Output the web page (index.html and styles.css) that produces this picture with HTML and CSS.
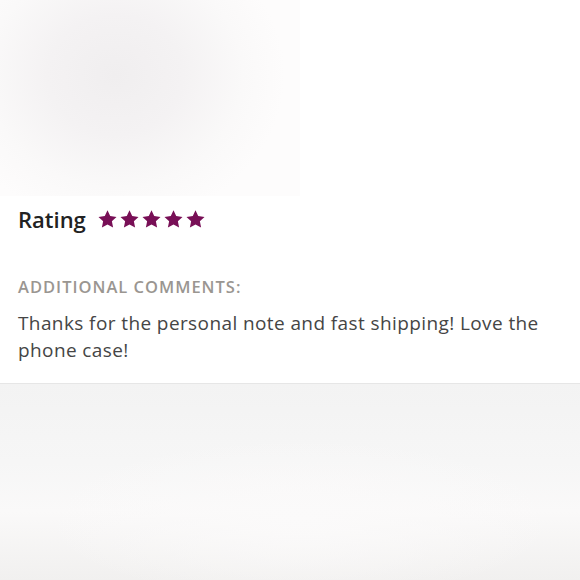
FILE: index.html
```html
<!DOCTYPE html>
<html>
<head>
<meta charset="utf-8">
<link rel="stylesheet" href="styles.css">
</head>
<body>
<div class="hero"><div class="blur"></div></div>
<section class="review">
  <div class="rating">
    <span class="rating-label">Rating</span>
    <span class="stars">
      <svg class="star" viewBox="0 0 24 24"><path d="M12 1.5l3.1 6.6 7.2.9-5.3 5 1.4 7.2L12 17.7l-6.4 3.5 1.4-7.2-5.3-5 7.2-.9z"/></svg>
      <svg class="star" viewBox="0 0 24 24"><path d="M12 1.5l3.1 6.6 7.2.9-5.3 5 1.4 7.2L12 17.7l-6.4 3.5 1.4-7.2-5.3-5 7.2-.9z"/></svg>
      <svg class="star" viewBox="0 0 24 24"><path d="M12 1.5l3.1 6.6 7.2.9-5.3 5 1.4 7.2L12 17.7l-6.4 3.5 1.4-7.2-5.3-5 7.2-.9z"/></svg>
      <svg class="star" viewBox="0 0 24 24"><path d="M12 1.5l3.1 6.6 7.2.9-5.3 5 1.4 7.2L12 17.7l-6.4 3.5 1.4-7.2-5.3-5 7.2-.9z"/></svg>
      <svg class="star" viewBox="0 0 24 24"><path d="M12 1.5l3.1 6.6 7.2.9-5.3 5 1.4 7.2L12 17.7l-6.4 3.5 1.4-7.2-5.3-5 7.2-.9z"/></svg>
    </span>
  </div>
  <div class="label">ADDITIONAL COMMENTS:</div>
  <p class="comment">Thanks for the personal note and fast shipping! Love the phone case!</p>
</section>
<div class="footer-blur"></div>
</body>
</html>
```
FILE: styles.css
```css
html, body {
  margin: 0;
  padding: 0;
  background: #ffffff;
}
body {
  width: 580px;
  height: 580px;
  overflow: hidden;
  font-family: "Open Sans", Lato, sans-serif;
  display: flex;
  flex-direction: column;
}
.hero {
  height: 196px;
  flex: none;
}
.blur {
  width: 300px;
  height: 196px;
  background: radial-gradient(ellipse 170px 150px at 115px 75px, #f0eeef 0%, #f4f2f3 40%, #faf9f9 75%, #fdfcfc 100%);
}
.review {
  padding: 9px 18px 19px;
  border-bottom: 1px solid #e6e6e6;
  flex: none;
}
.rating {
  display: flex;
  align-items: center;
  gap: 11px;
  height: 28px;
}
.rating-label {
  font-size: 22px;
  font-weight: 600;
  color: #222222;
}
.stars {
  display: flex;
  gap: 1px;
}
.star {
  width: 21px;
  height: 21px;
  fill: #780f56;
}
.label {
  margin-top: 44px;
  font-size: 16.5px;
  font-weight: 600;
  color: #9a9691;
  letter-spacing: 1px;
  line-height: 20px;
}
.comment {
  margin: 13px 0 0;
  font-size: 19px;
  line-height: 27px;
  letter-spacing: 0.4px;
  color: #454545;
}
.footer-blur {
  flex: 1;
  background:
    radial-gradient(ellipse 260px 80px at 300px 135px, #fbfafa 0%, rgba(251,250,250,0) 100%),
    linear-gradient(180deg, #f3f3f3 0%, #f6f6f6 40%, #faf9f9 65%, #f1f0ef 100%);
}
```
